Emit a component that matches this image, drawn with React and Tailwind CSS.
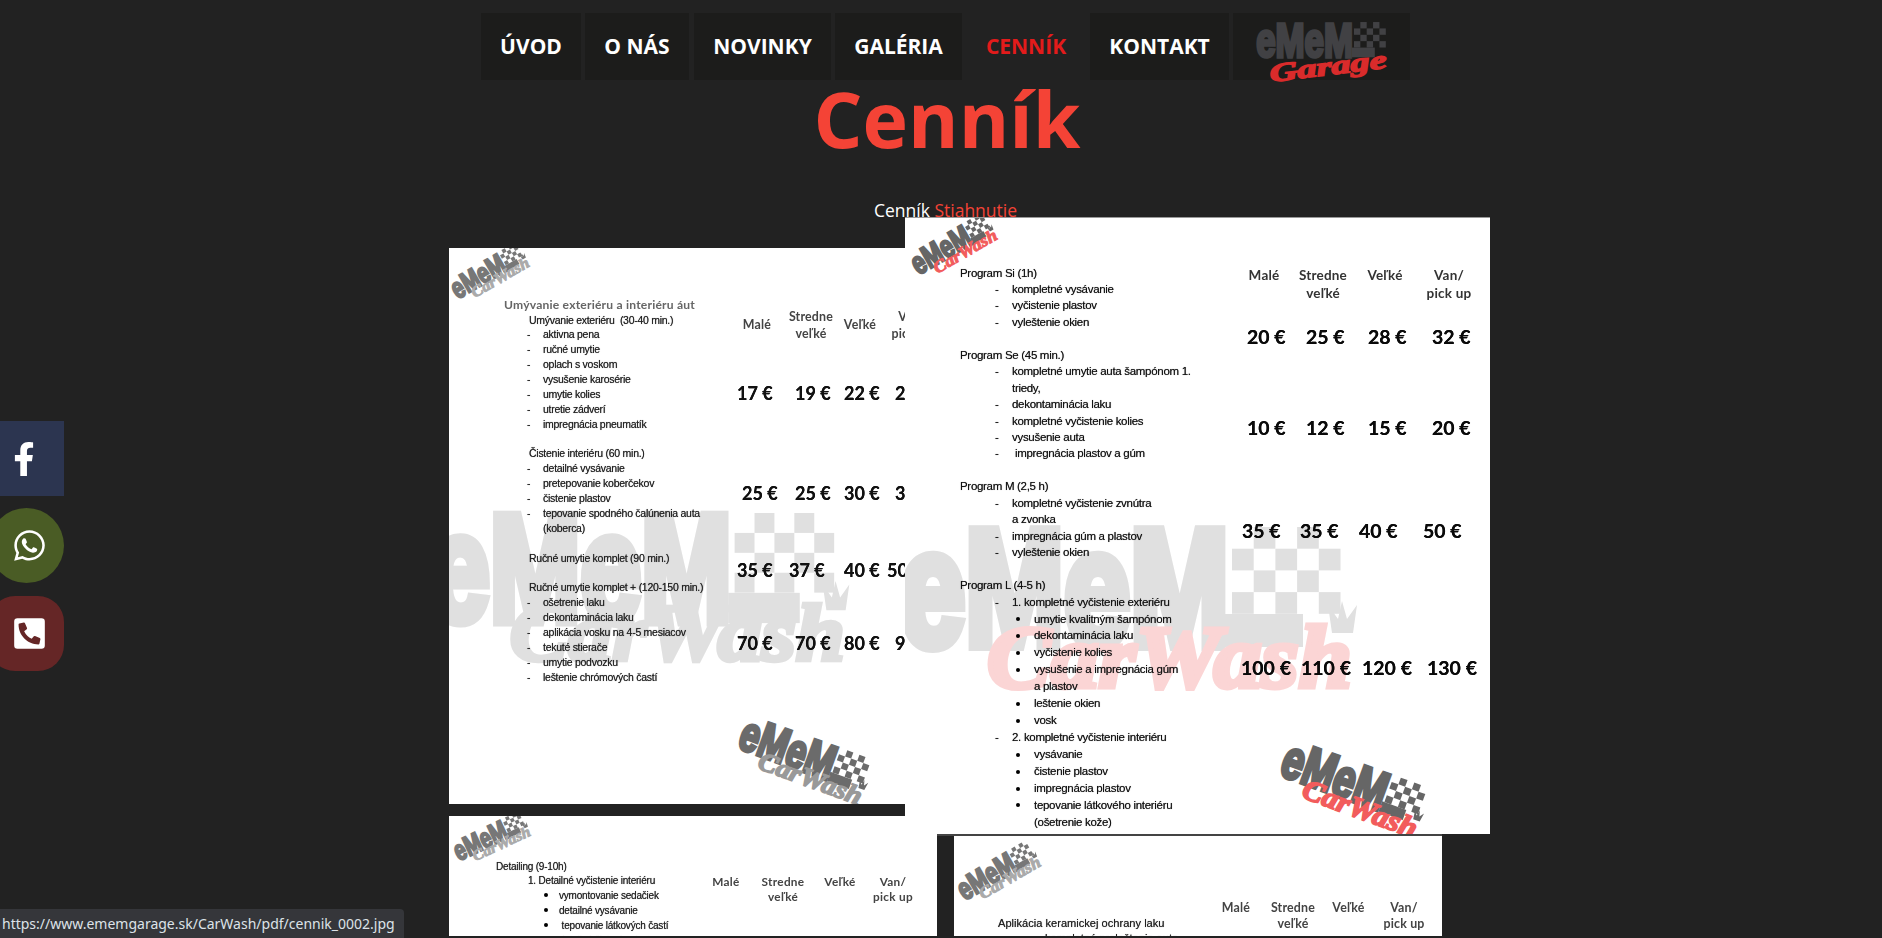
import React from "react";
import { FaFacebookF, FaWhatsapp, FaPhoneSquareAlt } from "react-icons/fa";

function Logo({ fill = "#777", accent = "#aaa", script = "CarWash", scriptX = 92, scriptLen = 365, scriptY = 160, scriptSize = 88, scriptTransform, crown = true, className = "" }) {
  const cells = [];
  for (let r = 0; r < 4; r++) for (let c = 0; c < 5; c++) if ((r + c) % 2 === 1) cells.push([c, r]);
  return (
    <svg viewBox="0 0 470 170" className={"overflow-visible " + className} aria-hidden="true">
      <text x="4" y="118" fontFamily="Liberation Sans" fontWeight="700" fontSize="166" textLength="330" lengthAdjust="spacingAndGlyphs" fill={fill} stroke={fill} strokeWidth="12" strokeLinejoin="miter">eMeM</text>
      {cells.map(([c, r]) => (
        <rect key={c + "-" + r} x={337 + c * 21.7} y={r * 21.7} width="21.7" height="21.7" fill={fill} />
      ))}
      <rect x="330" y="87" width="78" height="33" fill={fill} />
      {crown && <path d="M437 106 L433 78 L443 92 L447 74 L452 92 L462 78 L458 106 Z" fill={fill} />}
      <text x={scriptX} y={scriptY} fontFamily="Liberation Serif" fontStyle="italic" fontWeight="700" fontSize={scriptSize} textLength={scriptLen} lengthAdjust="spacingAndGlyphs" fill={accent} stroke={accent} strokeWidth="5" transform={scriptTransform}>{script}</text>
    </svg>
  );
}

function Line({ t, kind, headClass, dashClass, dashW, bulletClass, bulletW, contClass }) {
  if (kind === "blank") return <div>&nbsp;</div>;
  if (kind === "h") return <div className={headClass}>{t}</div>;
  if (kind === "c") return <div className={contClass}>{t}</div>;
  if (kind === "b") return <div className={"flex items-center " + bulletClass}><span className={bulletW}><span className="block h-[4px] w-[4px] rounded-full bg-black" /></span><span>{t}</span></div>;
  if (kind === "bc") return <div className={bulletClass}><span className={"inline-block " + bulletW} />{t}</div>;
  return <div className={dashClass}><span className={"inline-block " + dashW}>-</span>{t}</div>;
}

function PriceRow({ className, cells }) {
  return (
    <div className={"flex whitespace-nowrap [text-shadow:0_0_0.5px_#000] " + className}>
      {cells.map(([c, v], i) => <span key={i} className={"shrink-0 " + c}>{v}</span>)}
    </div>
  );
}

const list1 = [
  ["Umývanie exteriéru  (30-40 min.)", "h"], ["aktivna pena"], ["ručné umytie"], ["oplach s voskom"], ["vysušenie karosérie"], ["umytie kolies"], ["utretie zádverí"], ["impregnácia pneumatík"],
  ["", "blank"],
  ["Čistenie interiéru (60 min.)", "h"], ["detailné vysávanie"], ["pretepovanie koberčekov"], ["čistenie plastov"], ["tepovanie spodného čalúnenia auta"], ["(koberca)", "c"],
  ["", "blank"],
  ["Ručné umytie komplet (90 min.)", "h"],
  ["", "blank"],
  ["Ručné umytie komplet + (120-150 min.)", "h"], ["ošetrenie laku"], ["dekontaminácia laku"], ["aplikácia vosku na 4-5 mesiacov"], ["tekuté stierače"], ["umytie podvozku"], ["leštenie chrómových častí"],
];

const list2a = [
  ["Program Si (1h)", "h"], ["kompletné vysávanie"], ["vyčistenie plastov"], ["vyleštenie okien"],
  ["", "blank"],
  ["Program Se (45 min.)", "h"], ["kompletné umytie auta šampónom 1."], ["triedy,", "c"], ["dekontaminácia laku"], ["kompletné vyčistenie kolies"], ["vysušenie auta"], [" impregnácia plastov a gúm"],
  ["", "blank"],
  ["Program M (2,5 h)", "h"], ["kompletné vyčistenie zvnútra"], ["a zvonka", "c"], ["impregnácia gúm a plastov"], ["vyleštenie okien"],
  ["", "blank"],
  ["Program L (4-5 h)", "h"],
];

const list2b = [
  ["1. kompletné vyčistenie exteriéru"], ["umytie kvalitným šampónom", "b"], ["dekontaminácia laku", "b"], ["vyčistenie kolies", "b"], ["vysušenie a impregnácia gúm", "b"], ["a plastov", "bc"], ["leštenie okien", "b"], ["vosk", "b"],
  ["2. kompletné vyčistenie interiéru"], ["vysávanie", "b"], ["čistenie plastov", "b"], ["impregnácia plastov", "b"], ["tepovanie látkového interiéru", "b"], ["(ošetrenie kože)", "bc"],
];

function Doc1() {
  const p = "font-['Lato'] font-bold text-[18px] leading-[26px] text-[#111] h-[26px]";
  return (
    <div className="relative mt-[31px] h-[556px] w-[456px] shrink-0 overflow-hidden bg-white">
      <Logo fill="#e0e0e0" accent="#e0e0e0" className="absolute left-[-24px] top-[265px] h-[156px] w-[432px]" />
      <Logo fill="#777" accent="#aaa" className="absolute left-[-1px] top-[11px] h-[30px] w-[84px] -rotate-30" />
      <Logo fill="#6b6b6b" accent="#999" className="absolute left-[285px] top-[488px] h-[51px] w-[140px] rotate-20" />
      <div className="relative flex blur-[0.35px]">
        <div className="w-[280px] shrink-0 pl-[55px] pt-[49px] whitespace-pre font-['Liberation_Sans'] text-[10.5px] leading-[14.875px] tracking-[-0.27px] text-[#222] [text-shadow:0_0_0.7px_rgba(0,0,0,0.7)]">
          <div className="h-[15.6px] font-['Lato'] text-[12.1px] font-bold leading-[15.6px] tracking-[0.2px] text-[#666] [text-shadow:none]">Umývanie exteriéru a interiéru áut</div>
          {list1.map(([t, k], i) => (
            <Line key={i} t={t} kind={k} headClass="pl-[25px]" dashClass="pl-[23px]" dashW="w-[16px]" contClass="pl-[39px]" />
          ))}
        </div>
        <div className="flex-1">
          <div className="flex items-center pt-[59.5px] text-center font-['Lato'] text-[12.4px] font-bold leading-[17px] tracking-[0.2px] text-[#444]">
            <span className="w-[56px] shrink-0">Malé</span>
            <span className="w-[52px] shrink-0">Stredne<br />veľké</span>
            <span className="w-[46px] shrink-0">Veľké</span>
            <span className="w-[58px] shrink-0">Van/<br />pick up</span>
          </div>
          <PriceRow className={"mt-[38.5px] " + p} cells={[["ml-[8px] w-[58px]", "17 €"], ["w-[49px]", "19 €"], ["w-[51px]", "22 €"], ["", "28 €"]]} />
          <PriceRow className={"mt-[74px] " + p} cells={[["ml-[13px] w-[53px]", "25 €"], ["w-[49px]", "25 €"], ["w-[51px]", "30 €"], ["", "35 €"]]} />
          <PriceRow className={"mt-[51px] " + p} cells={[["ml-[8px] w-[52px]", "35 €"], ["w-[55px]", "37 €"], ["w-[43px]", "40 €"], ["", "50 €"]]} />
          <PriceRow className={"mt-[47px] " + p} cells={[["ml-[8px] w-[58px]", "70 €"], ["w-[49px]", "70 €"], ["w-[51px]", "80 €"], ["", "90 €"]]} />
        </div>
      </div>
    </div>
  );
}

function Doc2() {
  const p = "font-['Lato'] font-bold text-[19.5px] leading-[28px] text-[#0a0a0a] h-[28px]";
  const shared = { headClass: "", dashClass: "pl-[35px]", dashW: "w-[17px]", bulletClass: "pl-[56px]", bulletW: "w-[18px]", contClass: "pl-[52px]" };
  return (
    <div className="relative z-10 h-[617px] w-[585px] shrink-0 overflow-hidden border-t border-[#999] bg-white">
      <Logo fill="#e0e0e0" accent="#fbd5d5" className="absolute left-[-10px] top-[309px] h-[170px] w-[470px]" />
      <Logo fill="#666" accent="#f25c5c" className="absolute left-[3px] top-[13px] h-[33px] w-[92px] -rotate-30" />
      <Logo fill="#666" accent="#f25c5c" className="absolute left-[370px] top-[544px] h-[56px] w-[156px] rotate-20" />
      <div className="relative flex blur-[0.3px]">
        <div className="w-[300px] shrink-0 pl-[55px] pt-[46.5px] whitespace-pre font-['Liberation_Sans'] text-[11.5px] tracking-[-0.3px] text-[#111] [text-shadow:0_0_0.7px_rgba(0,0,0,0.7)]">
          <div className="leading-[16.45px]">
            {list2a.map(([t, k], i) => <Line key={i} t={t} kind={k} {...shared} />)}
          </div>
          <div className="leading-[16.95px]">
            {list2b.map(([t, k], i) => <Line key={i} t={t} kind={k} {...shared} />)}
          </div>
        </div>
        <div className="flex-1">
          <div className="flex items-start pt-[48px] text-center font-['Lato'] text-[13.5px] font-bold leading-[18px] tracking-[0.2px] text-[#333]">
            <span className="ml-[30px] w-[58px] shrink-0">Malé</span>
            <span className="w-[60px] shrink-0">Stredne<br />veľké</span>
            <span className="w-[64px] shrink-0">Veľké</span>
            <span className="w-[64px] shrink-0">Van/<br />pick up</span>
          </div>
          <PriceRow className={"mt-[21px] " + p} cells={[["ml-[42px] w-[59px]", "20 €"], ["w-[62px]", "25 €"], ["w-[64px]", "28 €"], ["", "32 €"]]} />
          <PriceRow className={"mt-[63px] " + p} cells={[["ml-[42px] w-[59px]", "10 €"], ["w-[62px]", "12 €"], ["w-[64px]", "15 €"], ["", "20 €"]]} />
          <PriceRow className={"mt-[75px] " + p} cells={[["ml-[37px] w-[58px]", "35 €"], ["w-[59px]", "35 €"], ["w-[64px]", "40 €"], ["", "50 €"]]} />
          <PriceRow className={"mt-[109px] " + p} cells={[["ml-[36px] w-[60px]", "100 €"], ["w-[61px]", "110 €"], ["w-[65px]", "120 €"], ["", "130 €"]]} />
        </div>
      </div>
    </div>
  );
}

function Doc3() {
  return (
    <div className="relative h-[120px] w-[488px] shrink-0 overflow-hidden bg-white">
      <Logo fill="#777" accent="#aaa" className="absolute left-[3px] top-[9px] h-[29px] w-[80px] -rotate-25" />
      <div className="relative flex blur-[0.35px]">
        <div className="w-[240px] shrink-0 pl-[47px] pt-[42.5px] whitespace-pre font-['Liberation_Sans'] text-[10px] leading-[15px] tracking-[-0.2px] text-[#222] [text-shadow:0_0_0.7px_rgba(0,0,0,0.7)]">
          <div className="mb-[-1px]">Detailing (9-10h)</div>
          <div className="pl-[32px]">1. Detailné vyčistenie interiéru</div>
          {["vymontovanie sedačiek", "detailné vysávanie", " tepovanie látkových častí", "detailné čistenie plastov"].map((t) => (
            <div key={t} className="flex items-center pl-[48px]"><span className="w-[15px]"><span className="block h-[4px] w-[4px] rounded-full bg-black" /></span><span>{t}</span></div>
          ))}
        </div>
        <div className="flex-1">
          <div className="flex items-start pt-[57.5px] text-center font-['Lato'] text-[11.8px] font-bold leading-[15px] tracking-[0.3px] text-[#444]">
            <span className="ml-[9px] w-[56px] shrink-0">Malé</span>
            <span className="w-[58px] shrink-0">Stredne<br />veľké</span>
            <span className="w-[56px] shrink-0">Veľké</span>
            <span className="w-[50px] shrink-0">Van/<br />pick up</span>
          </div>
        </div>
      </div>
    </div>
  );
}

function Doc4() {
  return (
    <div className="mt-[18px] h-[102px] w-[505px] shrink-0 border-t-2 border-[#444] pl-[17px]">
      <div className="relative h-[100px] w-[488px] overflow-hidden bg-white">
        <Logo fill="#777" accent="#aaa" className="absolute left-[1px] top-[22px] h-[32px] w-[88px] -rotate-30" />
        <div className="relative flex blur-[0.35px]">
          <div className="w-[240px] shrink-0 pl-[44px] pt-[79.5px] whitespace-pre font-['Liberation_Sans'] text-[11.1px] leading-[15px] text-[#222] [text-shadow:0_0_0.7px_rgba(0,0,0,0.7)]">
            <div>Aplikácia keramickej ochrany laku</div>
            <div className="pl-[47px]">kompletné preleštenie auta</div>
          </div>
          <div className="flex-1">
            <div className="flex items-start pt-[64px] text-center font-['Lato'] text-[12.4px] font-bold leading-[16px] tracking-[0.2px] text-[#444]">
              <span className="ml-[14px] w-[56px] shrink-0">Malé</span>
              <span className="w-[58px] shrink-0">Stredne<br />veľké</span>
              <span className="w-[53px] shrink-0">Veľké</span>
              <span className="w-[58px] shrink-0">Van/<br />pick up</span>
            </div>
          </div>
        </div>
      </div>
    </div>
  );
}

const navItems = [
  ["ÚVOD", "w-[100px]"], ["O NÁS", "w-[104px] ml-[4px]"], ["NOVINKY", "w-[137px] ml-[5px]"], ["GALÉRIA", "w-[127px] ml-[4px]"],
];

export default function App() {
  return (
    <div className="relative h-screen w-full overflow-hidden bg-[#222222] font-['Open_Sans',sans-serif] text-white">
      <nav className="flex justify-center pl-[9px] pt-[13px]">
        {navItems.map(([t, w]) => (
          <a key={t} className={"flex h-[67px] items-center justify-center bg-[#1c1c1b] text-[21px] font-bold " + w}>{t}</a>
        ))}
        <a className="flex h-[67px] w-[128px] items-center justify-center text-[21px] font-bold text-[#e31b1b]">CENNÍK</a>
        <a className="flex h-[67px] w-[139px] items-center justify-center bg-[#1c1c1b] text-[21px] font-bold">KONTAKT</a>
        <a className="ml-[4px] flex h-[67px] w-[177px] items-start bg-[#1c1c1b] pl-[22px] pt-[9px]">
          <Logo fill="#414144" accent="#d92b2b" script="Garage" scriptX={51} scriptLen={400} scriptY={180} scriptSize={88} scriptTransform="rotate(-7 250 170)" crown={false} className="h-[50px] w-[138px]" />
        </a>
      </nav>
      <h1 className="h-[119px] pl-[12px] text-center text-[77px] font-bold leading-[78px] text-[#f44336]">Cenník</h1>
      <p className="relative z-20 h-[18px] pl-[9px] text-center text-[17.5px] leading-[22px]">
        Cenník <a className="text-[#f44336]">Stiahnutie</a>
      </p>
      <div className="ml-[449px]">
        <div className="flex h-[599px] items-start">
          <Doc1 />
          <Doc2 />
        </div>
        <div className="flex items-start">
          <Doc3 />
          <Doc4 />
        </div>
      </div>

      <div className="fixed left-0 top-[421px] z-30 flex flex-col gap-[12px]">
        <a className="flex h-[75px] w-[64px] items-center bg-[#2c3550] pl-[7px] text-[34px]"><FaFacebookF /></a>
        <a className="ml-[-11px] flex h-[75px] w-[75px] items-center rounded-full bg-[#4a5c25] pl-[23px] text-[35px]"><FaWhatsapp /></a>
        <a className="ml-[-11px] mt-[1px] flex h-[75px] w-[75px] items-center rounded-[26px] bg-[#652626] pl-[23px] text-[35px]"><FaPhoneSquareAlt /></a>
      </div>

      <div className="fixed bottom-0 left-0 z-40 flex h-[29px] w-[404px] items-center rounded-tr-[4px] bg-[#35363a] pl-[2px] font-['Noto_Sans'] text-[14px] text-[#dde3e8]">
        https://www.ememgarage.sk/CarWash/pdf/cennik_0002.jpg
      </div>
    </div>
  );
}
